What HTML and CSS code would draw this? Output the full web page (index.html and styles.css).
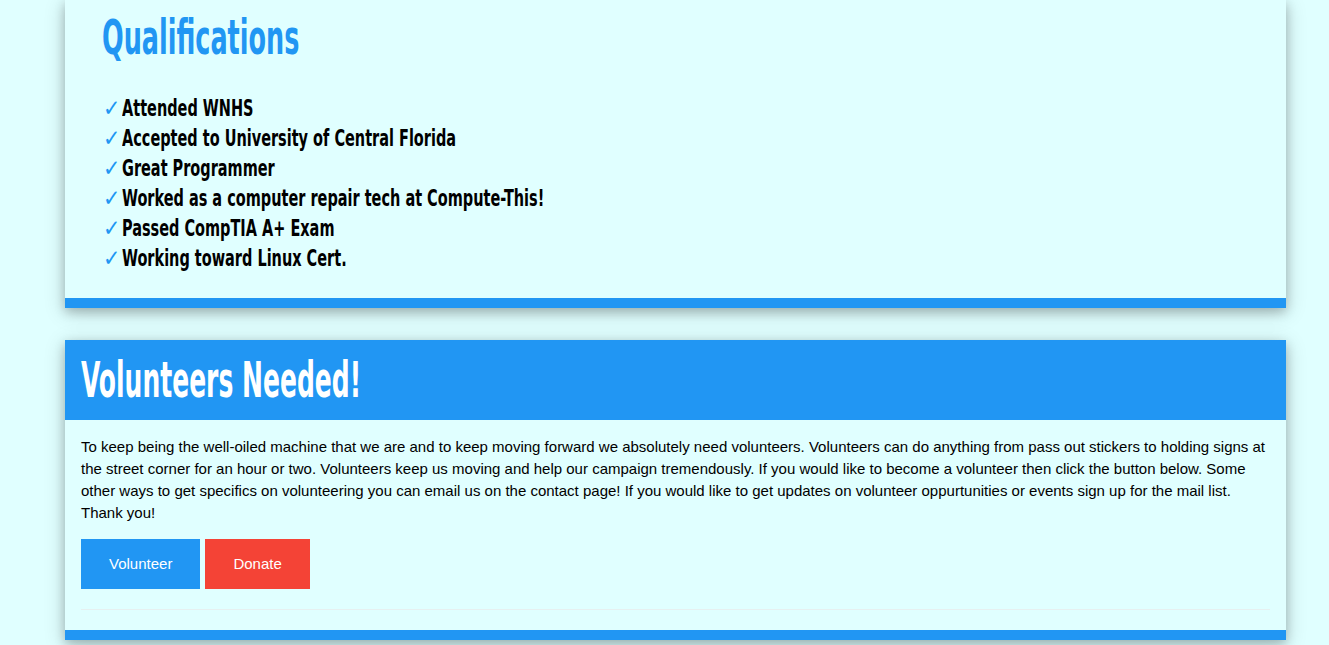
FILE: index.html
```html
<!DOCTYPE html>
<html lang="en">
<head>
<meta charset="utf-8">
<title>Volunteers</title>
<link rel="stylesheet" href="styles.css">
</head>
<body>
<main class="page">
  <section class="card">
    <div class="quals-body">
      <h2 class="quals-title">Qualifications</h2>
      <ul class="quals-list">
        <li><span class="check">✓</span><span class="item">Attended WNHS</span></li>
        <li><span class="check">✓</span><span class="item">Accepted to University of Central Florida</span></li>
        <li><span class="check">✓</span><span class="item">Great Programmer</span></li>
        <li><span class="check">✓</span><span class="item">Worked as a computer repair tech at Compute-This!</span></li>
        <li><span class="check">✓</span><span class="item">Passed CompTIA A+ Exam</span></li>
        <li><span class="check">✓</span><span class="item">Working toward Linux Cert.</span></li>
      </ul>
    </div>
    <div class="card-bar"></div>
  </section>
  <section class="card card-vol">
    <header class="vol-head">
      <h2 class="vol-title">Volunteers Needed!</h2>
    </header>
    <div class="vol-body">
      <p class="vol-text">To keep being the well-oiled machine that we are and to keep moving forward we absolutely need volunteers. Volunteers can do anything from pass out stickers to holding signs at the street corner for an hour or two. Volunteers keep us moving and help our campaign tremendously. If you would like to become a volunteer then click the button below. Some other ways to get specifics on volunteering you can email us on the contact page! If you would like to get updates on volunteer oppurtunities or events sign up for the mail list. Thank you!</p>
      <div class="btn-row">
        <a class="btn btn-blue" href="#">Volunteer</a>
        <a class="btn btn-red" href="#">Donate</a>
      </div>
      <hr class="rule">
    </div>
    <div class="card-bar"></div>
  </section>
</main>
</body>
</html>
```

FILE: styles.css
```css
html, body {
  margin: 0;
  padding: 0;
}
body {
  background: #e0ffff;
  font-family: "Liberation Sans", Arial, sans-serif;
  font-size: 15px;
  color: #000;
}
.page {
  width: 1221px;
  margin-left: 65px;
  padding-bottom: 40px;
}
.card {
  background: #e0ffff;
  box-shadow: 0 4px 10px 0 rgba(0,0,0,0.2), 0 4px 20px 0 rgba(0,0,0,0.19);
}
.card-bar {
  height: 10px;
  background: #2196f3;
}
.quals-body {
  padding: 7px 37px 25px 37px;
}
.quals-title, .vol-title, .quals-list {
  font-family: "DejaVu Sans Condensed", "DejaVu Sans", sans-serif;
  font-stretch: condensed;
  font-weight: bold;
}
.quals-title {
  margin: 0;
  font-size: 48px;
  line-height: 60px;
  color: #2196f3;
  transform: scaleX(0.59);
  transform-origin: left center;
}
.quals-list {
  list-style: none;
  margin: 26px 0 0 0;
  padding: 0;
  font-size: 23px;
  line-height: 30px;
}
.check {
  display: inline-block;
  width: 20px;
  padding-left: 1px;
  box-sizing: border-box;
  color: #2196f3;
}
.item {
  display: inline-block;
  transform: scaleX(0.70);
  transform-origin: left center;
  white-space: nowrap;
}
.card-vol {
  margin-top: 32px;
}
.vol-head {
  background: #2196f3;
  height: 80px;
  padding: 0 16px;
  display: flex;
  align-items: center;
}
.vol-title {
  margin: 0;
  font-size: 50px;
  color: #fff;
  transform: scaleX(0.556);
  transform-origin: left center;
}
.vol-body {
  padding: 16px 16px 20px;
}
.vol-text {
  margin: 0;
  line-height: 22px;
}
.btn-row {
  display: flex;
  gap: 5px;
  margin-top: 15px;
}
.btn {
  display: block;
  padding: 15px 28px;
  line-height: 20px;
  color: #fff;
  text-decoration: none;
  font-size: 15px;
}
.btn-blue { background: #2196f3; }
.btn-red { background: #f44336; }
.rule {
  margin: 20px 0 0;
  border: 0;
  border-top: 1px solid #e6f0f0;
}
```
